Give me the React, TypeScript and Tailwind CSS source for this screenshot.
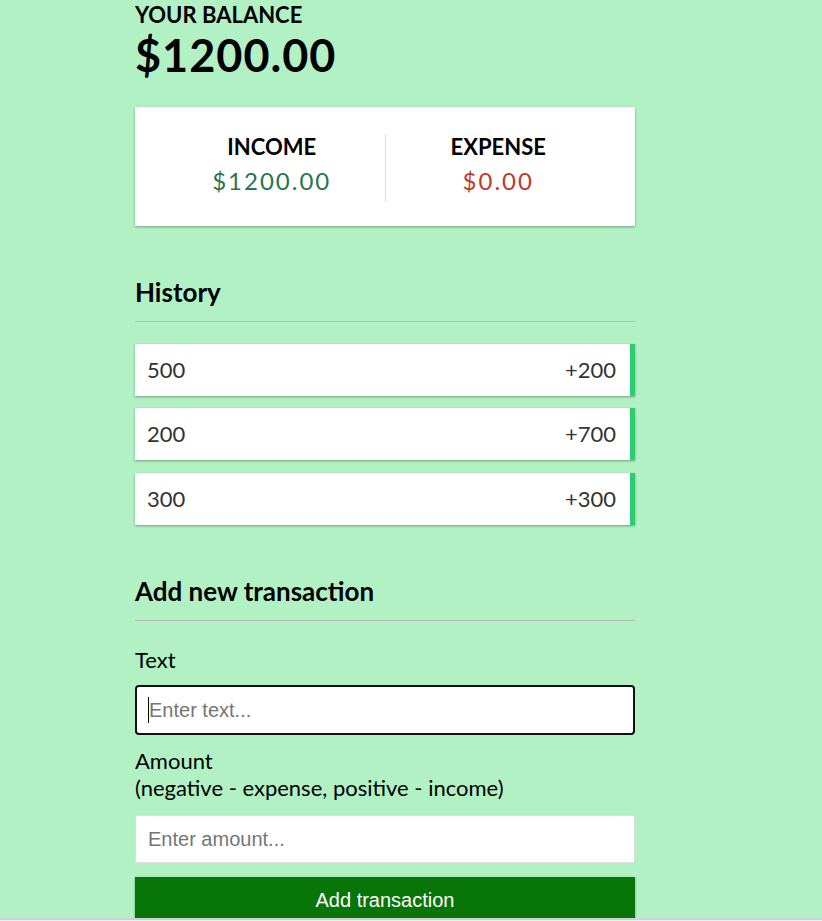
import React from "react";

const transactions = [
  { id: 1, text: "500", amount: 200 },
  { id: 2, text: "200", amount: 700 },
  { id: 3, text: "300", amount: 300 },
];

const shadow = "shadow-[0_1px_3px_rgba(0,0,0,0.12),0_1px_2px_rgba(0,0,0,0.24)]";

export default function App() {
  return (
    <div className="min-h-screen bg-[#b1f1c4] font-['Lato',sans-serif] text-black">
      <div className="ml-[135px] w-[500px] pt-[2px]">
        {/* Balance */}
        <h4 className="m-0 text-[22px] font-bold uppercase leading-[1.2]">Your Balance</h4>
        <h1 className="m-0 text-[45px] font-bold leading-[1.2] tracking-[1px]">$1200.00</h1>

        {/* Income / Expense */}
        <div className={`mt-[25px] flex bg-white px-6 pb-6 pt-[27px] ${shadow}`}>
          <div className="flex-1 border-r border-[#dedede] text-center">
            <h4 className="text-[22px] font-bold uppercase leading-[1.2]">Income</h4>
            <p className="my-[6px] text-[24px] leading-[1.2] tracking-[2px] text-[#2c7350]">$1200.00</p>
          </div>
          <div className="flex-1 text-center">
            <h4 className="text-[22px] font-bold uppercase leading-[1.2]">Expense</h4>
            <p className="my-[6px] text-[24px] leading-[1.2] tracking-[2px] text-[#c0392b]">$0.00</p>
          </div>
        </div>

        {/* History */}
        <h3 className="mt-[51px] border-b border-[#bbb] pb-[13px] text-[26px] font-bold leading-[1.2]">History</h3>
        <ul className="mt-[22px] flex flex-col gap-[12.5px]">
          {transactions.map((t) => (
            <li
              key={t.id}
              className={`flex justify-between border-r-[5px] border-[#2ecc71] bg-white py-3 pl-3 pr-[14px] text-[22px] leading-[28px] text-[#333] ${shadow}`}
            >
              <span>{t.text}</span>
              <span>+{t.amount}</span>
            </li>
          ))}
        </ul>

        {/* Add new transaction */}
        <h3 className="mt-[51px] border-b border-[#bbb] pb-[13px] text-[26px] font-bold leading-[1.2]">Add new transaction</h3>
        <form>
          <div>
            <label className="mb-3 mt-[26px] block text-[22px] leading-[1.2]">Text</label>
            <div className="relative">
              <input
                type="text"
                placeholder="Enter text..."
                className="block h-[50px] w-full rounded-[4px] border-2 border-[#111] bg-white px-3 font-['Liberation_Sans',Arial,sans-serif] text-[20px] outline-none placeholder:text-[#757575]"
              />
              <span className="absolute left-[13px] top-[12px] h-[26px] w-px bg-black" />
            </div>
          </div>
          <div>
            <label className="mb-[14px] mt-[13px] block text-[22px] leading-[1.2]">
              Amount <br />
              (negative - expense, positive - income)
            </label>
            <input
              type="number"
              placeholder="Enter amount..."
              className="block h-12 w-full rounded-[2px] border border-[#dedede] bg-white px-3 font-['Liberation_Sans',Arial,sans-serif] text-[20px] outline-none placeholder:text-[#757575]"
            />
          </div>
          <button
            type="button"
            className={`mb-9 mt-[14px] block w-full bg-[#077508] py-3 font-['Liberation_Sans',Arial,sans-serif] text-[20px] leading-[23px] text-white ${shadow}`}
          >
            Add transaction
          </button>
        </form>
      </div>
      <div className="fixed bottom-0 left-0 right-0 h-[3px] border-t-2 border-[#cfcfd8] bg-[#eeeeee]" />
    </div>
  );
}
